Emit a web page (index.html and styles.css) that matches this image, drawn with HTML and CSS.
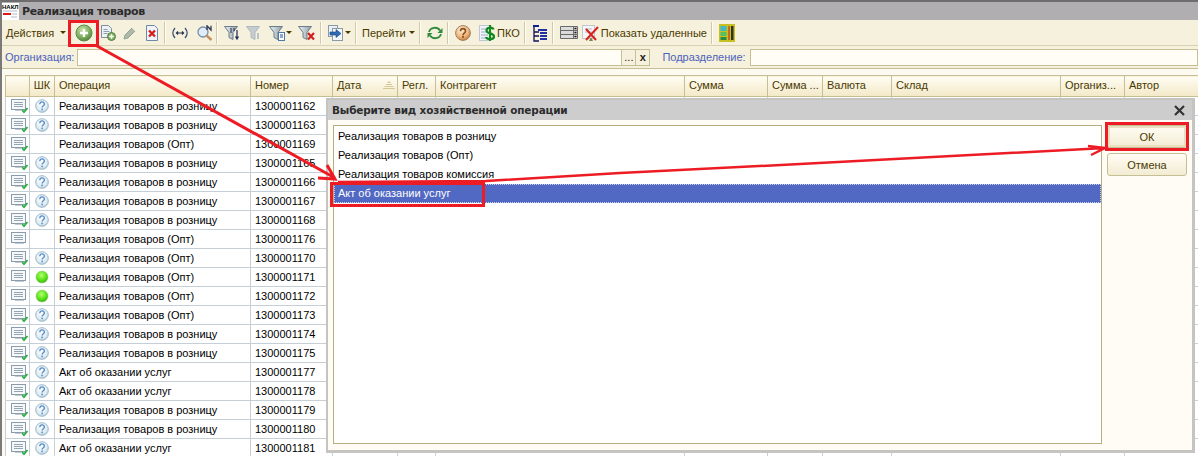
FILE: index.html
```html
<!DOCTYPE html>
<html lang="ru">
<head>
    <meta charset="UTF-8">
    <title>Реализация товаров</title>
    <link rel="stylesheet" href="styles.css">
</head>
<body>
    <svg class="defs" width="0" height="0">
        <defs>
            <radialGradient id="g-add" cx="40%" cy="30%" r="75%"><stop offset="0" stop-color="#c8e0a8"/><stop offset="0.6" stop-color="#7fb060"/><stop offset="1" stop-color="#4f7f3c"/></radialGradient>
            <radialGradient id="g-help" cx="40%" cy="30%" r="75%"><stop offset="0" stop-color="#fff0d8"/><stop offset="0.6" stop-color="#f0b880"/><stop offset="1" stop-color="#c07838"/></radialGradient>
            <radialGradient id="g-ball" cx="45%" cy="35%" r="65%"><stop offset="0" stop-color="#b8ff70"/><stop offset="0.7" stop-color="#50e010"/><stop offset="1" stop-color="#38a810"/></radialGradient>
            <radialGradient id="g-q" cx="45%" cy="35%" r="70%"><stop offset="0" stop-color="#ffffff"/><stop offset="0.7" stop-color="#dceaf2"/><stop offset="1" stop-color="#a8c2d0"/></radialGradient>
            <linearGradient id="g-funnel" x1="0" x2="1"><stop offset="0" stop-color="#f0f4f6"/><stop offset="1" stop-color="#8a9aa4"/></linearGradient>
            <symbol id="i-doc" viewBox="0 0 18 16"><rect x="0.500" y="1.500" width="14" height="10" fill="#f6f8fa" stroke="#8a9cac"/><path d="M3 4.500h9M3 6.500h9M3 8.500h9" stroke="#93a4b2"/><path d="M4 12.500h9" stroke="#c0cad2"/></symbol>
            <symbol id="i-doc-ok" viewBox="0 0 18 16"><rect x="0.500" y="1.500" width="14" height="10" fill="#f6f8fa" stroke="#8a9cac"/><path d="M3 4.500h9M3 6.500h9M3 8.500h9" stroke="#93a4b2"/><path d="M4 12.500h6" stroke="#c0cad2"/><path d="M11 12l2 2.200 3.500-4.200" fill="none" stroke="#2cae44" stroke-width="1.800"/></symbol>
            <symbol id="i-q" viewBox="0 0 14 14"><circle cx="7" cy="7" r="6.300" fill="url(#g-q)" stroke="#9ab8ca"/><path d="M4.800 5.200c0-3 4.600-3 4.600-.2 0 1.800-2.300 1.800-2.300 3.600" fill="none" stroke="#5a90c8" stroke-width="1.400"/><rect x="6.300" y="9.600" width="1.600" height="1.600" fill="#5a90c8"/></symbol>
            <symbol id="i-ball" viewBox="0 0 14 14"><circle cx="7" cy="7" r="6" fill="url(#g-ball)" stroke="#8fcc70" stroke-width="0.600"/></symbol>
            <symbol id="i-add" viewBox="0 0 18 18"><circle cx="9" cy="9" r="8" fill="url(#g-add)" stroke="#5e8a50"/><path d="M9 5v8M5 9h8" stroke="#fff" stroke-width="2.400"/></symbol>
            <symbol id="i-doc-add" viewBox="0 0 16 16"><path d="M1.500.5h7l3 3v9h-10z" fill="#eef2f6" stroke="#7d8e9c"/><path d="M3.500 4.500h4M3.500 6.500h6M3.500 8.500h4" stroke="#8ea0ae"/><circle cx="11.500" cy="11.500" r="4" fill="#7fb060" stroke="#55803f"/><path d="M11.500 9.200v4.600M9.200 11.500h4.600" stroke="#fff" stroke-width="1.500"/></symbol>
            <symbol id="i-pencil" viewBox="0 0 16 16"><path d="M2 14l1-4 7-7 3 3-7 7z" fill="#aebaa8" stroke="#96a296"/><path d="M10 3l3 3" stroke="#d0d8cc"/></symbol>
            <symbol id="i-doc-del" viewBox="0 0 16 16"><path d="M2.500.5h8l3 3v12h-11z" fill="#f0f4fa" stroke="#6e88a8"/><path d="M5 5.500l6 6M11 5.500l-6 6" stroke="#d02020" stroke-width="2.400"/></symbol>
            <symbol id="i-paren" viewBox="0 0 16 16"><path d="M3 3c-2.600 3-2.600 7 0 10M13 3c2.600 3 2.600 7 0 10" fill="none" stroke="#3a4e78" stroke-width="1.200"/><path d="M4.500 8h7M6 6.500L4.500 8 6 9.500M10 6.500L11.500 8 10 9.500" fill="none" stroke="#24304c" stroke-width="1.200"/></symbol>
            <symbol id="i-search" viewBox="0 0 16 16"><circle cx="6" cy="7" r="5" fill="#e0ecf8" stroke="#7890a8" stroke-width="1.300"/><path d="M9.500 10.500l5 4.500" stroke="#c89060" stroke-width="2.400"/><path d="M10 5V.8l4 4.200V.8" fill="none" stroke="#2a3450" stroke-width="1.300"/></symbol>
            <symbol id="i-filter" viewBox="0 0 16 16"><path d="M.5 1.500h13l-4.500 6v7l-4-2v-5z" fill="url(#g-funnel)" stroke="#6c7c88"/><path d="M13 5v8M11.500 11.500L13 14l1.500-2.500" fill="none" stroke="#1e2c58" stroke-width="1.200"/><path d="M7 3v5M10 3v3" stroke="#1e2c58"/></symbol>
            <symbol id="i-filter-off" viewBox="0 0 16 16"><path d="M.5 1.500h13l-4.500 6v7l-4-2v-5z" fill="#c4ccd0" stroke="#aeb8be"/><path d="M12 8v6" stroke="#b8c2c8" stroke-width="2"/></symbol>
            <symbol id="i-filter-list" viewBox="0 0 16 16"><path d="M.5 1.500h13l-4.500 6v7l-4-2v-5z" fill="url(#g-funnel)" stroke="#6c7c88"/><rect x="9.500" y="7.500" width="6" height="8" fill="#fff" stroke="#5078a8"/><path d="M11 10h3M11 12h3" stroke="#2050a0"/></symbol>
            <symbol id="i-filter-del" viewBox="0 0 18 16"><path d="M.5 1.500h13l-4.500 6v7l-4-2v-5z" fill="url(#g-funnel)" stroke="#6c7c88"/><path d="M10 8l6 6.500M16 8l-6 6.500" stroke="#d02020" stroke-width="2.200"/></symbol>
            <symbol id="i-copy" viewBox="0 0 16 16"><rect x="0.500" y="0.500" width="9" height="11" fill="#eaf0f6" stroke="#8a9aa8"/><rect x="4.500" y="3.500" width="10" height="12" fill="#f4f7fa" stroke="#8a9aa8"/><path d="M2 7h6V4.500l5 4-5 4V10H2z" fill="#2c6cb8" stroke="#1c4078" stroke-width="0.600"/></symbol>
            <symbol id="i-refresh" viewBox="0 0 16 16"><path d="M2 7a6 5.500 0 0 1 11-1.500M14 9a6 5.500 0 0 1-11 1.500" fill="none" stroke="#2f8a3c" stroke-width="1.800"/><path d="M15.500 3v5h-5zM.5 13V8h5z" fill="#2f8a3c"/></symbol>
            <symbol id="i-help" viewBox="0 0 16 16"><circle cx="8" cy="8" r="7.400" fill="url(#g-help)" stroke="#a08060"/><path d="M5.500 6.200c0-3.400 5-3.400 5 0 0 2-2.500 2-2.500 4" fill="none" stroke="#8a5020" stroke-width="1.600"/><rect x="7.100" y="11" width="1.800" height="1.800" fill="#8a5020"/></symbol>
            <symbol id="i-cash" viewBox="0 0 16 18"><rect x="0.500" y="1.500" width="10" height="15" fill="#f2f4fa" stroke="#8a9cc0" stroke-dasharray="1 1"/><path d="M2 5h7M2 8h7M2 11h7M2 14h7" stroke="#9cacc8"/><path d="M14.500 5.500c-.8-2.500-7-2.500-7 1 0 3.800 7.500 1.800 7.500 6 0 3.300-7 3.500-8 .5M11 1v16" fill="none" stroke="#128a20" stroke-width="2.200"/></symbol>
            <symbol id="i-tree" viewBox="0 0 16 18"><path d="M1 1h6v2H1z" fill="#10208c"/><path d="M2 3v14h5M2 8h5M2 12h5" fill="none" stroke="#10105c" stroke-width="1.300"/><path d="M6 5h9v2H6zM8 8h7v2H8zM8 11h7v2H8zM8 14h7v2H8z" fill="#2030a0"/></symbol>
            <symbol id="i-rows" viewBox="0 0 18 16"><path d="M.5 1.500h17v4H.5zM.5 5.500h17v4H.5zM.5 9.500h17v4H.5z" fill="#dcdcdc" stroke="#6a6a6a"/><path d="M13.500 1.500v12" stroke="#6a6a6a"/><path d="M14.500 3.500h2M14.500 7.500h2M14.500 11.500h2" stroke="#101010" stroke-width="1.500"/></symbol>
            <symbol id="i-deleted" viewBox="0 0 18 18"><rect x="0.500" y="1.500" width="12" height="13" fill="#f4f6f8" stroke="#8a9cb0" stroke-dasharray="1 1"/><path d="M3 5h7M3 8h7" stroke="#b0bcc8"/><path d="M4 5l10 11M16 3L4 16" stroke="#d8201c" stroke-width="2"/><path d="M9 13l2 4H7z" fill="#6c8a50"/></symbol>
            <symbol id="i-report" viewBox="0 0 16 18"><rect width="16" height="18" fill="#c8c020"/><rect x="1.500" y="2" width="6" height="5" fill="#40b8c8"/><rect x="1.500" y="8" width="6" height="4" fill="#58c060"/><rect x="1.500" y="13" width="6" height="3" fill="#2a8a48"/><rect x="9" y="2" width="2" height="14" fill="#c07018"/><rect x="12" y="2" width="2.500" height="14" fill="#303030"/></symbol>
        </defs>
    </svg>

    <div class="window">
        <div class="titlebar">
            <svg class="page-icon" width="17" height="17" viewBox="0 0 17 17">
                <rect width="17" height="17" fill="#fff"/>
                <text x="0" y="6" class="page-icon-text">НАКЛ</text>
                <rect x="1" y="10" width="8" height="2" fill="#e01818"/>
                <path d="M1 8h14M10 11h5M9 14h6" stroke="#b0b8c8"/>
            </svg>
            <span>Реализация товаров</span>
        </div>

        <div class="toolbar">
            <span class="tb-text t-actions">Действия</span><i class="caret"></i>
            <span class="sep s-first"></span>
            <svg class="t-add" width="18" height="18"><use href="#i-add"/></svg>
            <svg class="t-doc-add" width="16" height="16"><use href="#i-doc-add"/></svg>
            <svg class="tool" width="16" height="16"><use href="#i-pencil"/></svg>
            <svg class="tool" width="16" height="16"><use href="#i-doc-del"/></svg>
            <span class="sep"></span>
            <svg class="tool" width="16" height="16"><use href="#i-paren"/></svg>
            <svg class="t-search" width="16" height="16"><use href="#i-search"/></svg>
            <span class="sep s-tight"></span>
            <svg class="tool" width="16" height="16"><use href="#i-filter"/></svg>
            <svg class="tool" width="16" height="16"><use href="#i-filter-off"/></svg>
            <svg class="tool t-filter-list" width="16" height="16"><use href="#i-filter-list"/></svg><i class="caret c-icon"></i>
            <svg class="tool" width="18" height="16"><use href="#i-filter-del"/></svg>
            <span class="sep"></span>
            <svg class="tool" width="16" height="16"><use href="#i-copy"/></svg><i class="caret c-icon"></i>
            <span class="sep"></span>
            <span class="tb-text t-goto">Перейти</span><i class="caret"></i>
            <span class="sep"></span>
            <svg class="tool" width="16" height="16"><use href="#i-refresh"/></svg>
            <span class="sep"></span>
            <svg class="tool" width="16" height="16"><use href="#i-help"/></svg>
            <svg class="tool t-cash" width="16" height="18"><use href="#i-cash"/></svg>
            <span class="tb-text t-pko">ПКО</span>
            <span class="sep"></span>
            <svg class="tool" width="16" height="18"><use href="#i-tree"/></svg>
            <span class="sep"></span>
            <svg class="tool" width="18" height="16"><use href="#i-rows"/></svg>
            <svg class="tool t-deleted-icon" width="18" height="18"><use href="#i-deleted"/></svg>
            <span class="tb-text t-deleted">Показать удаленные</span>
            <span class="sep"></span>
            <svg class="tool" width="16" height="18"><use href="#i-report"/></svg>
        </div>

        <div class="filters">
            <label class="field-label">Организация:</label>
            <div class="field field-org"></div>
            <div class="field-btn">...</div>
            <div class="field-btn field-clear">x</div>
            <label class="field-label label-dept">Подразделение:</label>
            <div class="field field-dept"></div>
        </div>

        <table class="grid">
            <colgroup>
                <col class="c1"><col class="c2"><col class="c3"><col class="c4"><col class="c5"><col class="c6"><col class="c7"><col class="c8"><col class="c9"><col class="c10"><col class="c11"><col class="c12"><col class="c13">
            </colgroup>
            <thead>
                <tr>
                    <th></th><th class="center">ШК</th><th>Операция</th><th>Номер</th>
                    <th>Дата<svg class="sort" width="12" height="8" viewBox="0 0 12 8"><path d="M6 0l2 2H4zM3 3h6v1H3zM1.500 5h9v1h-9zM0 7h12v1H0z" fill="#d6c896"/></svg></th>
                    <th>Регл.</th><th>Контрагент</th><th>Сумма</th><th>Сумма ...</th><th>Валюта</th><th>Склад</th><th>Организ...</th><th>Автор</th>
                </tr>
            </thead>
            <tbody>
                <tr><td class="ic ic-doc"><svg width="18" height="16"><use href="#i-doc-ok"/></svg></td><td class="ic"><svg width="14" height="14"><use href="#i-q"/></svg></td><td>Реализация товаров в розницу</td><td>1300001162</td><td></td><td></td><td></td><td></td><td></td><td></td><td></td><td></td><td></td></tr>
                <tr><td class="ic ic-doc"><svg width="18" height="16"><use href="#i-doc-ok"/></svg></td><td class="ic"><svg width="14" height="14"><use href="#i-q"/></svg></td><td>Реализация товаров в розницу</td><td>1300001163</td><td></td><td></td><td></td><td></td><td></td><td></td><td></td><td></td><td></td></tr>
                <tr><td class="ic ic-doc"><svg width="18" height="16"><use href="#i-doc-ok"/></svg></td><td class="ic"></td><td>Реализация товаров (Опт)</td><td>1300001169</td><td></td><td></td><td></td><td></td><td></td><td></td><td></td><td></td><td></td></tr>
                <tr><td class="ic ic-doc"><svg width="18" height="16"><use href="#i-doc-ok"/></svg></td><td class="ic"><svg width="14" height="14"><use href="#i-q"/></svg></td><td>Реализация товаров в розницу</td><td>1300001165</td><td></td><td></td><td></td><td></td><td></td><td></td><td></td><td></td><td></td></tr>
                <tr><td class="ic ic-doc"><svg width="18" height="16"><use href="#i-doc-ok"/></svg></td><td class="ic"><svg width="14" height="14"><use href="#i-q"/></svg></td><td>Реализация товаров в розницу</td><td>1300001166</td><td></td><td></td><td></td><td></td><td></td><td></td><td></td><td></td><td></td></tr>
                <tr><td class="ic ic-doc"><svg width="18" height="16"><use href="#i-doc-ok"/></svg></td><td class="ic"><svg width="14" height="14"><use href="#i-q"/></svg></td><td>Реализация товаров в розницу</td><td>1300001167</td><td></td><td></td><td></td><td></td><td></td><td></td><td></td><td></td><td></td></tr>
                <tr><td class="ic ic-doc"><svg width="18" height="16"><use href="#i-doc-ok"/></svg></td><td class="ic"><svg width="14" height="14"><use href="#i-q"/></svg></td><td>Реализация товаров в розницу</td><td>1300001168</td><td></td><td></td><td></td><td></td><td></td><td></td><td></td><td></td><td></td></tr>
                <tr><td class="ic ic-doc"><svg width="18" height="16"><use href="#i-doc"/></svg></td><td class="ic"></td><td>Реализация товаров (Опт)</td><td>1300001176</td><td></td><td></td><td></td><td></td><td></td><td></td><td></td><td></td><td></td></tr>
                <tr><td class="ic ic-doc"><svg width="18" height="16"><use href="#i-doc-ok"/></svg></td><td class="ic"><svg width="14" height="14"><use href="#i-q"/></svg></td><td>Реализация товаров (Опт)</td><td>1300001170</td><td></td><td></td><td></td><td></td><td></td><td></td><td></td><td></td><td></td></tr>
                <tr><td class="ic ic-doc"><svg width="18" height="16"><use href="#i-doc"/></svg></td><td class="ic"><svg width="14" height="14"><use href="#i-ball"/></svg></td><td>Реализация товаров (Опт)</td><td>1300001171</td><td></td><td></td><td></td><td></td><td></td><td></td><td></td><td></td><td></td></tr>
                <tr><td class="ic ic-doc"><svg width="18" height="16"><use href="#i-doc"/></svg></td><td class="ic"><svg width="14" height="14"><use href="#i-ball"/></svg></td><td>Реализация товаров (Опт)</td><td>1300001172</td><td></td><td></td><td></td><td></td><td></td><td></td><td></td><td></td><td></td></tr>
                <tr><td class="ic ic-doc"><svg width="18" height="16"><use href="#i-doc-ok"/></svg></td><td class="ic"><svg width="14" height="14"><use href="#i-q"/></svg></td><td>Реализация товаров (Опт)</td><td>1300001173</td><td></td><td></td><td></td><td></td><td></td><td></td><td></td><td></td><td></td></tr>
                <tr><td class="ic ic-doc"><svg width="18" height="16"><use href="#i-doc-ok"/></svg></td><td class="ic"><svg width="14" height="14"><use href="#i-q"/></svg></td><td>Реализация товаров в розницу</td><td>1300001174</td><td></td><td></td><td></td><td></td><td></td><td></td><td></td><td></td><td></td></tr>
                <tr><td class="ic ic-doc"><svg width="18" height="16"><use href="#i-doc-ok"/></svg></td><td class="ic"><svg width="14" height="14"><use href="#i-q"/></svg></td><td>Реализация товаров в розницу</td><td>1300001175</td><td></td><td></td><td></td><td></td><td></td><td></td><td></td><td></td><td></td></tr>
                <tr><td class="ic ic-doc"><svg width="18" height="16"><use href="#i-doc-ok"/></svg></td><td class="ic"><svg width="14" height="14"><use href="#i-q"/></svg></td><td>Акт об оказании услуг</td><td>1300001177</td><td></td><td></td><td></td><td></td><td></td><td></td><td></td><td></td><td></td></tr>
                <tr><td class="ic ic-doc"><svg width="18" height="16"><use href="#i-doc-ok"/></svg></td><td class="ic"><svg width="14" height="14"><use href="#i-q"/></svg></td><td>Акт об оказании услуг</td><td>1300001178</td><td></td><td></td><td></td><td></td><td></td><td></td><td></td><td></td><td></td></tr>
                <tr><td class="ic ic-doc"><svg width="18" height="16"><use href="#i-doc-ok"/></svg></td><td class="ic"><svg width="14" height="14"><use href="#i-q"/></svg></td><td>Реализация товаров в розницу</td><td>1300001179</td><td></td><td></td><td></td><td></td><td></td><td></td><td></td><td></td><td></td></tr>
                <tr><td class="ic ic-doc"><svg width="18" height="16"><use href="#i-doc-ok"/></svg></td><td class="ic"><svg width="14" height="14"><use href="#i-q"/></svg></td><td>Реализация товаров в розницу</td><td>1300001180</td><td></td><td></td><td></td><td></td><td></td><td></td><td></td><td></td><td></td></tr>
                <tr><td class="ic ic-doc"><svg width="18" height="16"><use href="#i-doc-ok"/></svg></td><td class="ic"><svg width="14" height="14"><use href="#i-q"/></svg></td><td>Акт об оказании услуг</td><td>1300001181</td><td></td><td></td><td></td><td></td><td></td><td></td><td></td><td></td><td></td></tr>
            </tbody>
        </table>
    </div>

    <div class="dialog">
        <div class="dialog-title">
            <span>Выберите вид хозяйственной операции</span>
            <svg width="11" height="11" viewBox="0 0 11 11"><path d="M1 1l9 9M10 1l-9 9" stroke="#333" stroke-width="2.200"/></svg>
        </div>
        <div class="dialog-body">
            <ul class="op-list">
                <li>Реализация товаров в розницу</li>
                <li>Реализация товаров (Опт)</li>
                <li>Реализация товаров комиссия</li>
                <li class="selected">Акт об оказании услуг</li>
            </ul>
            <div class="dialog-buttons">
                <button class="btn btn-default">ОК</button>
                <button class="btn">Отмена</button>
            </div>
        </div>
    </div>

    <!-- red marks drawn over the screenshot -->
    <svg class="marks" width="1198" height="456" viewBox="0 0 1198 456">
        <g fill="none" stroke="#ed1c24" stroke-width="3">
            <rect x="69.500" y="21.500" width="28" height="24"/>
            <rect x="331.500" y="183.500" width="152" height="22"/>
            <rect x="1106.500" y="123.500" width="81" height="26"/>
            <path d="M97 46L335 178M318 178l17 1-8-14"/>
            <path d="M338 182L486 181 620 173 800 164 1105 148M1088 146l17 2-14 7" stroke-width="2.500"/>
        </g>
    </svg>
</body>
</html>
```

FILE: styles.css
```css
body {
    margin: 0;
    height: 456px;
    overflow: hidden;
    position: relative;
    background: #fdfaf1;
    font-family: "Liberation Sans", Arial, sans-serif;
    font-size: 11px;
    color: #000;
}
.defs {
    position: absolute;
}
.window {
    border-left: 2px solid #7c7a78;
    border-top: 2px solid #6e6c6c;
}

/* title */
.titlebar {
    height: 18px;
    background: #b0aeb0;
    display: flex;
    align-items: center;
    gap: 3px;
    font-family: "DejaVu Sans", sans-serif;
    font-weight: bold;
    font-size: 11px;
    letter-spacing: -0.4px;
    color: #2c2c2c;
}
.page-icon {
    flex: none;
    margin-top: 1px;
}
.page-icon-text {
    font-family: "Liberation Sans", sans-serif;
    font-size: 6px;
    font-weight: bold;
    letter-spacing: 0;
    fill: #000;
}

/* toolbar */
.toolbar {
    height: 25px;
    background: #f6f1dc;
    border-bottom: 1px solid #d8d2b4;
    display: flex;
    align-items: center;
    padding-left: 4px;
    color: #4a3a00;
}
.tb-text {
    white-space: nowrap;
}
.tool {
    margin-left: 6px;
    flex: none;
}
.t-add {
    margin-left: 4px;
    flex: none;
}
.t-doc-add {
    margin-left: 7px;
    flex: none;
}
.t-search {
    margin-left: 9px;
    flex: none;
}
.t-filter-list {
    margin-left: 7px;
}
.t-actions {
    width: 52px;
}
.t-goto {
    width: 45px;
    margin-left: 5px;
}
.t-cash {
    margin-left: 8px;
}
.t-pko {
    margin-left: 2px;
}
.t-deleted-icon {
    margin-left: 4px;
}
.t-deleted {
    margin-left: 1px;
}
.caret {
    width: 0;
    height: 0;
    border-left: 3px solid transparent;
    border-right: 3px solid transparent;
    border-top: 3px solid #4a3a00;
    margin-left: 2px;
    flex: none;
}
.c-icon {
    margin-left: 1px;
}
.sep {
    width: 1px;
    height: 22px;
    background: #cfc9aa;
    border-right: 1px solid #fffdf4;
    margin-left: 4px;
    flex: none;
}
.s-first {
    margin-left: 3px;
}
.s-tight {
    margin-left: 3px;
}

/* filter row */
.filters {
    height: 22px;
    background: #f6f1dc;
    border-bottom: 1px solid #c6bf96;
    display: flex;
    align-items: center;
    color: #4c62bc;
    padding-left: 3px;
}
.field-label {
    white-space: nowrap;
}
.field {
    height: 17px;
    box-sizing: border-box;
    background: #fffdf6;
    border: 1px solid #c6bf96;
}
.field-org {
    width: 545px;
    margin-left: 3px;
}
.field-dept {
    flex: 1;
    margin-left: 4px;
}
.field-btn {
    width: 14px;
    height: 17px;
    box-sizing: border-box;
    border: 1px solid #c6bf96;
    border-left: none;
    background: #f6f1dc;
    color: #222;
    text-align: center;
    line-height: 14px;
}
.field-clear {
    font-weight: bold;
}
.label-dept {
    margin-left: 12px;
}

/* list */
.grid {
    border-collapse: collapse;
    table-layout: fixed;
    width: 1193px;
    margin: 6px 0 0 3px;
    border-top: 1px solid #c6bf96;
}
.c1 { width: 24px; }
.c2 { width: 25px; }
.c3 { width: 196px; }
.c4 { width: 82px; }
.c5 { width: 65px; }
.c6 { width: 38px; }
.c7 { width: 249px; }
.c8 { width: 83px; }
.c9 { width: 55px; }
.c10 { width: 69px; }
.c11 { width: 169px; }
.c12 { width: 64px; }
.c13 { width: 74px; }
.grid th {
    height: 18px;
    padding: 0 4px 2px;
    text-align: left;
    font-weight: normal;
    color: #4a3a00;
    white-space: nowrap;
    background: linear-gradient(#fffdf3, #f3e9c8);
    border: 1px solid #c6bf96;
}
.grid th.center {
    text-align: center;
    padding: 0 0 2px;
}
.sort {
    margin-left: 22px;
}
.grid td {
    height: 18px;
    padding: 0 4px;
    background: #fff;
    border: 1px solid #c5cfd8;
    white-space: nowrap;
    overflow: hidden;
}
.grid td.ic {
    padding: 0;
    text-align: center;
    line-height: 0;
}
.grid td.ic-doc {
    padding-left: 4px;
}

/* dialog */
.dialog {
    position: absolute;
    left: 326px;
    top: 98px;
    width: 869px;
    height: 355px;
    box-sizing: border-box;
    border: 2px solid #c6c4c0;
    border-right-width: 3px;
    border-bottom-width: 3px;
    background: #fffbf5;
    display: flex;
    flex-direction: column;
}
.dialog-title {
    height: 20px;
    flex: none;
    background: #cdcdcd;
    display: flex;
    align-items: center;
    justify-content: space-between;
    padding: 0 7px 0 4px;
    font-family: "DejaVu Sans", sans-serif;
    font-weight: bold;
    font-size: 10.500px;
    letter-spacing: -0.17px;
    color: #2c2c2c;
}
.dialog-body {
    flex: 1;
    display: flex;
    padding: 5px 5px 6px 5px;
    gap: 5px;
    min-height: 0;
}
.op-list {
    list-style: none;
    margin: 0;
    padding: 1px 0 0;
    width: 769px;
    box-sizing: border-box;
    background: #fff;
    border: 1px solid #b6ae80;
}
.op-list li {
    height: 19px;
    line-height: 19px;
    padding-left: 4px;
}
.op-list .selected {
    background: #5269c3;
    color: #fff;
    outline: 1px dotted #c8d0f0;
    outline-offset: -1px;
}
.dialog-buttons {
    display: flex;
    flex-direction: column;
    gap: 5px;
}
.btn {
    width: 80px;
    height: 23px;
    padding: 0;
    font: inherit;
    color: #4a3a00;
    background: linear-gradient(#fffdf3, #f3ecd4);
    border: 1px solid #c6bf96;
    border-radius: 3px;
}
.btn-default {
    box-shadow: inset 0 0 0 2px #e8e0c0;
}

.marks {
    position: absolute;
    left: 0;
    top: 0;
    pointer-events: none;
}
```
